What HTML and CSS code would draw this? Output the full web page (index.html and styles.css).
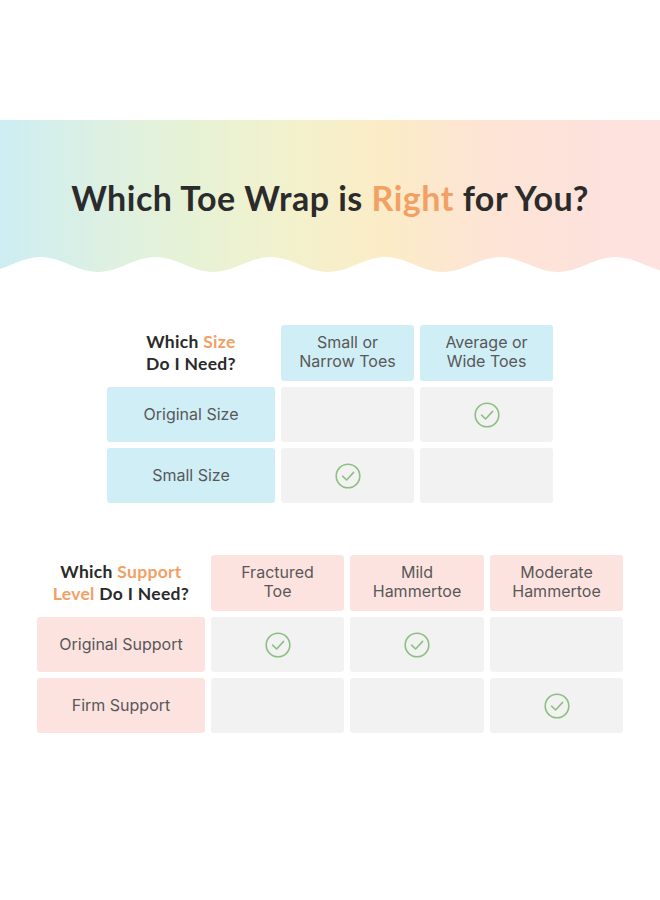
FILE: index.html
```html
<!DOCTYPE html>
<html lang="en">
<head>
<meta charset="utf-8">
<title>Which Toe Wrap is Right for You?</title>
<link rel="stylesheet" href="styles.css">
</head>
<body>
<header class="banner">
  <h1 class="title">Which Toe Wrap is <span class="accent">Right</span> for You?</h1>
  <svg class="wave" viewBox="0 0 660 17" width="660" height="17" aria-hidden="true">
    <path fill="#ffffff" d="M-17,15 C3.7,15 19.8,0 40.5,0 C61.2,0 77.3,15 98,15 C118.7,15 134.8,0 155.5,0 C176.2,0 192.3,15 213,15 C233.7,15 249.8,0 270.5,0 C291.2,0 307.3,15 328,15 C348.7,15 364.8,0 385.5,0 C406.2,0 422.3,15 443,15 C463.7,15 479.8,0 500.5,0 C521.2,0 537.3,15 558,15 C578.7,15 594.8,0 615.5,0 C636.2,0 652.3,15 673,15 L673,17 L-17,17 Z"/>
  </svg>
</header>

<main class="content">
  <section class="grid grid-size">
    <div class="cell corner"><p class="corner-text">Which <span class="accent">Size</span><br>Do I Need?</p></div>
    <div class="cell head blue"><p class="cell-text">Small or<br>Narrow Toes</p></div>
    <div class="cell head blue"><p class="cell-text">Average or<br>Wide Toes</p></div>

    <div class="cell row blue"><p class="cell-text">Original Size</p></div>
    <div class="cell empty"></div>
    <div class="cell empty"><svg class="check" viewBox="0 0 26 26"><circle cx="13" cy="13" r="11.8"/><path d="M7.6 13.2 L11.6 17 L18.6 9.4"/></svg></div>

    <div class="cell row blue"><p class="cell-text">Small Size</p></div>
    <div class="cell empty"><svg class="check" viewBox="0 0 26 26"><circle cx="13" cy="13" r="11.8"/><path d="M7.6 13.2 L11.6 17 L18.6 9.4"/></svg></div>
    <div class="cell empty"></div>
  </section>

  <section class="grid grid-support">
    <div class="cell corner"><p class="corner-text">Which <span class="accent">Support</span><br><span class="accent">Level</span> Do I Need?</p></div>
    <div class="cell head pink"><p class="cell-text">Fractured<br>Toe</p></div>
    <div class="cell head pink"><p class="cell-text">Mild<br>Hammertoe</p></div>
    <div class="cell head pink"><p class="cell-text">Moderate<br>Hammertoe</p></div>

    <div class="cell row pink"><p class="cell-text">Original Support</p></div>
    <div class="cell empty"><svg class="check" viewBox="0 0 26 26"><circle cx="13" cy="13" r="11.8"/><path d="M7.6 13.2 L11.6 17 L18.6 9.4"/></svg></div>
    <div class="cell empty"><svg class="check" viewBox="0 0 26 26"><circle cx="13" cy="13" r="11.8"/><path d="M7.6 13.2 L11.6 17 L18.6 9.4"/></svg></div>
    <div class="cell empty"></div>

    <div class="cell row pink"><p class="cell-text">Firm Support</p></div>
    <div class="cell empty"></div>
    <div class="cell empty"></div>
    <div class="cell empty"><svg class="check" viewBox="0 0 26 26"><circle cx="13" cy="13" r="11.8"/><path d="M7.6 13.2 L11.6 17 L18.6 9.4"/></svg></div>
  </section>
</main>
</body>
</html>
```

FILE: styles.css
```css
* { box-sizing: border-box; }

html, body {
  margin: 0;
  padding: 0;
  background: #ffffff;
}

body {
  width: 660px;
  height: 900px;
  overflow: hidden;
  font-family: "Inter", "Liberation Sans", sans-serif;
  color: #555555;
}

.banner {
  position: relative;
  margin-top: 120px;
  height: 154px;
  background: linear-gradient(90deg,
    #cdedf3 0%,
    #dcf0e3 15%,
    #e6f2d6 28%,
    #f3f1cc 45%,
    #fbecc6 58%,
    #fde5d4 72%,
    #fde2db 88%,
    #fde2e0 100%);
  display: flex;
  justify-content: center;
  padding-top: 58px;
}

.title {
  margin: 0;
  font-family: "Lato", "Liberation Sans", sans-serif;
  font-weight: 700;
  font-size: 34px;
  line-height: 40px;
  color: #2b2b2b;
  letter-spacing: 0.5px;
}

.accent { color: #f2a064; }

.wave {
  position: absolute;
  left: 0;
  bottom: 0;
  display: block;
  overflow: visible;
}

.content {
  display: flex;
  flex-direction: column;
  align-items: center;
}

.grid {
  display: grid;
  gap: 6px;
}

.grid-size {
  margin-top: 51px;
  grid-template-columns: 168px 133px 133px;
  grid-template-rows: 56px 55px 55px;
}

.grid-support {
  margin-top: 52px;
  grid-template-columns: 168px 133px 134px 133px;
  grid-template-rows: 56px 55px 55px;
}

.cell {
  display: flex;
  align-items: center;
  justify-content: center;
  text-align: center;
  border-radius: 3px;
}

.cell-text {
  margin: 0;
  font-size: 16px;
  line-height: 19px;
  color: #585858;
}

.head .cell-text { margin-top: -2px; }

.corner-text {
  margin: 0;
  font-family: "Lato", "Liberation Sans", sans-serif;
  font-weight: 700;
  font-size: 17.5px;
  line-height: 22px;
  color: #2a2a2a;
  letter-spacing: 0.3px;
}

.blue { background: #cfeef6; }
.pink { background: #fde3e0; }
.empty { background: #f2f2f2; }

.check {
  width: 26px;
  height: 26px;
  fill: none;
  stroke: #8cc083;
  stroke-width: 1.6;
  stroke-linecap: round;
  stroke-linejoin: round;
}
```
